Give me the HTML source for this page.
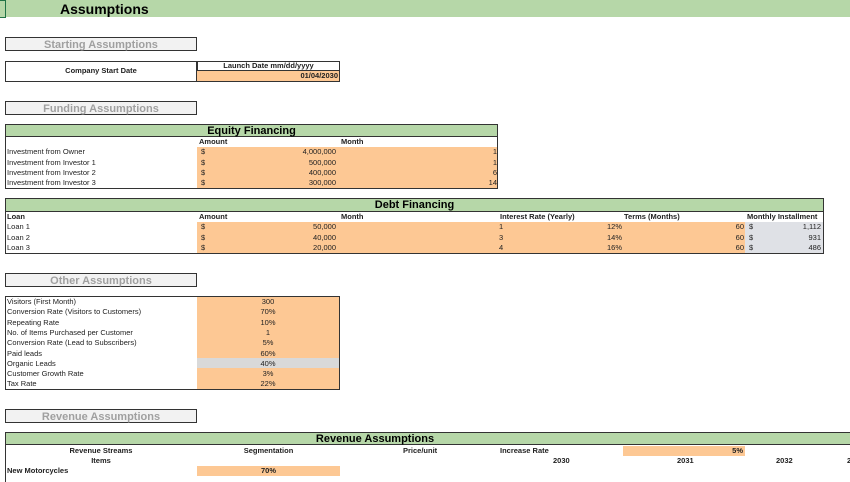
<!DOCTYPE html>
<html><head><meta charset="utf-8"><style>
*{margin:0;padding:0;box-sizing:border-box}
body{width:850px;height:472px;overflow:hidden;background:#fff;font-family:"Liberation Sans",Arial,sans-serif;font-size:7.5px;color:#222;position:relative}
.a{position:absolute}
.box{position:absolute;background:#f2f2f2;border:1.5px solid #333;color:#a0a0a0;font-weight:bold;font-size:11px;text-align:center;line-height:11px;padding-top:1.5px}
.or{background:#fdc894}
.gr{background:#b6d7a8}
.b{font-weight:bold}
.r{text-align:right}
.c{text-align:center}
.t{position:absolute;line-height:10px;white-space:nowrap}
</style></head><body>
<div class="a gr" style="left:0;top:0;width:850px;height:17px"></div>
<div class="a" style="left:0;top:0;width:6px;height:18px;border:1px solid #217346;border-left:none"></div>
<div class="t b" style="left:60px;top:2px;font-size:14px;line-height:14px;color:#000">Assumptions</div>

<div class="box" style="left:5px;top:37px;width:192px;height:14px">Starting Assumptions</div>

<div class="a" style="left:5px;top:61px;width:335px;height:21px;border:1.5px solid #333"></div>
<div class="a" style="left:196px;top:61px;width:1.5px;height:21px;background:#333"></div>
<div class="a" style="left:197px;top:70px;width:143px;height:1px;background:#333"></div>
<div class="a or" style="left:197px;top:71px;width:142px;height:10px"></div>
<div class="t b c" style="left:5px;top:66px;width:192px">Company Start Date</div>
<div class="t b c" style="left:197px;top:61px;width:143px">Launch Date mm/dd/yyyy</div>
<div class="t b r" style="left:197px;top:71px;width:141px">01/04/2030</div>

<div class="box" style="left:5px;top:101px;width:192px;height:14px">Funding Assumptions</div>

<!-- Equity -->
<div class="a" style="left:5px;top:124px;width:493px;height:65px;border:1.5px solid #333"></div>
<div class="a gr" style="left:6px;top:125px;width:491px;height:12px;border-bottom:1px solid #333"></div>
<div class="t b c" style="left:5px;top:125px;width:493px;font-size:11px;line-height:12px;color:#000">Equity Financing</div>
<div class="a or" style="left:197px;top:147px;width:300px;height:41px"></div>
<div class="t b" style="left:199px;top:137px">Amount</div>
<div class="t b" style="left:341px;top:137px">Month</div>
<div class="t" style="left:7px;top:147px">Investment from Owner</div>
<div class="t" style="left:7px;top:157.5px">Investment from Investor 1</div>
<div class="t" style="left:7px;top:168px">Investment from Investor 2</div>
<div class="t" style="left:7px;top:178px">Investment from Investor 3</div>
<div class="t" style="left:201px;top:147px">$</div><div class="t" style="left:201px;top:157.5px">$</div><div class="t" style="left:201px;top:168px">$</div><div class="t" style="left:201px;top:178px">$</div>
<div class="t r" style="left:236px;width:100px;top:147px">4,000,000</div>
<div class="t r" style="left:236px;width:100px;top:157.5px">500,000</div>
<div class="t r" style="left:236px;width:100px;top:168px">400,000</div>
<div class="t r" style="left:236px;width:100px;top:178px">300,000</div>
<div class="t r" style="left:400px;width:97px;top:147px">1</div>
<div class="t r" style="left:400px;width:97px;top:157.5px">1</div>
<div class="t r" style="left:400px;width:97px;top:168px">6</div>
<div class="t r" style="left:400px;width:97px;top:178px">14</div>

<!-- Debt -->
<div class="a" style="left:5px;top:198px;width:819px;height:56px;border:1.5px solid #333"></div>
<div class="a gr" style="left:6px;top:199px;width:817px;height:13px;border-bottom:1px solid #333"></div>
<div class="t b c" style="left:5px;top:199px;width:819px;font-size:11px;line-height:13px;color:#000">Debt Financing</div>
<div class="a or" style="left:197px;top:222px;width:548px;height:31px"></div>
<div class="a" style="left:745px;top:222px;width:78px;height:31px;background:#dfe1e6"></div>
<div class="t b" style="left:7px;top:212px">Loan</div>
<div class="t b" style="left:199px;top:212px">Amount</div>
<div class="t b" style="left:341px;top:212px">Month</div>
<div class="t b" style="left:500px;top:212px">Interest Rate (Yearly)</div>
<div class="t b" style="left:624px;top:212px">Terms (Months)</div>
<div class="t b" style="left:747px;top:212px">Monthly Installment</div>
<div class="t" style="left:7px;top:222px">Loan 1</div><div class="t" style="left:7px;top:232.5px">Loan 2</div><div class="t" style="left:7px;top:243px">Loan 3</div>
<div class="t" style="left:201px;top:222px">$</div><div class="t" style="left:201px;top:232.5px">$</div><div class="t" style="left:201px;top:243px">$</div>
<div class="t r" style="left:236px;width:100px;top:222px">50,000</div>
<div class="t r" style="left:236px;width:100px;top:232.5px">40,000</div>
<div class="t r" style="left:236px;width:100px;top:243px">20,000</div>
<div class="t" style="left:499px;top:222px">1</div><div class="t" style="left:499px;top:232.5px">3</div><div class="t" style="left:499px;top:243px">4</div>
<div class="t r" style="left:560px;width:62px;top:222px">12%</div>
<div class="t r" style="left:560px;width:62px;top:232.5px">14%</div>
<div class="t r" style="left:560px;width:62px;top:243px">16%</div>
<div class="t r" style="left:700px;width:44px;top:222px">60</div>
<div class="t r" style="left:700px;width:44px;top:232.5px">60</div>
<div class="t r" style="left:700px;width:44px;top:243px">60</div>
<div class="t" style="left:749px;top:222px">$</div><div class="t" style="left:749px;top:232.5px">$</div><div class="t" style="left:749px;top:243px">$</div>
<div class="t r" style="left:770px;width:51px;top:222px">1,112</div>
<div class="t r" style="left:770px;width:51px;top:232.5px">931</div>
<div class="t r" style="left:770px;width:51px;top:243px">486</div>

<div class="box" style="left:5px;top:273px;width:192px;height:14px">Other Assumptions</div>

<!-- Other -->
<div class="a" style="left:5px;top:296px;width:335px;height:94px;border:1.5px solid #333"></div>
<div class="a or" style="left:197px;top:297px;width:142px;height:92px"></div>
<div class="a" style="left:197px;top:358px;width:142px;height:10px;background:#d9d9d9"></div>
<div class="t" style="left:7px;top:297px">Visitors (First Month)</div><div class="t c" style="left:197px;width:142px;top:297px">300</div>
<div class="t" style="left:7px;top:307.3px">Conversion Rate (Visitors to Customers)</div><div class="t c" style="left:197px;width:142px;top:307.3px">70%</div>
<div class="t" style="left:7px;top:317.6px">Repeating Rate</div><div class="t c" style="left:197px;width:142px;top:317.6px">10%</div>
<div class="t" style="left:7px;top:327.9px">No. of Items Purchased per Customer</div><div class="t c" style="left:197px;width:142px;top:327.9px">1</div>
<div class="t" style="left:7px;top:338.2px">Conversion Rate (Lead to Subscribers)</div><div class="t c" style="left:197px;width:142px;top:338.2px">5%</div>
<div class="t" style="left:7px;top:348.5px">Paid leads</div><div class="t c" style="left:197px;width:142px;top:348.5px">60%</div>
<div class="t" style="left:7px;top:358.8px">Organic Leads</div><div class="t c" style="left:197px;width:142px;top:358.8px">40%</div>
<div class="t" style="left:7px;top:369.1px">Customer Growth Rate</div><div class="t c" style="left:197px;width:142px;top:369.1px">3%</div>
<div class="t" style="left:7px;top:379.4px">Tax Rate</div><div class="t c" style="left:197px;width:142px;top:379.4px">22%</div>

<div class="box" style="left:5px;top:409px;width:192px;height:14px">Revenue Assumptions</div>

<!-- Revenue -->
<div class="a" style="left:5px;top:432px;width:850px;height:50px;border-top:1.5px solid #333;border-left:1.5px solid #333"></div>
<div class="a gr" style="left:6px;top:433px;width:844px;height:12px;border-bottom:1px solid #333"></div>
<div class="t b c" style="left:5px;top:433px;width:740px;font-size:11px;line-height:12px;color:#000">Revenue Assumptions</div>
<div class="a or" style="left:623px;top:446px;width:122px;height:10px"></div>
<div class="a or" style="left:197px;top:466px;width:143px;height:10px"></div>
<div class="t b c" style="left:5px;width:192px;top:446px">Revenue Streams</div>
<div class="t b c" style="left:197px;width:143px;top:446px">Segmentation</div>
<div class="t b" style="left:403px;top:446px">Price/unit</div>
<div class="t b" style="left:500px;top:446px">Increase Rate</div>
<div class="t b r" style="left:623px;width:120px;top:446px">5%</div>
<div class="t b c" style="left:5px;width:192px;top:456px">Items</div>
<div class="t b" style="left:553px;top:456px">2030</div>
<div class="t b" style="left:677px;top:456px">2031</div>
<div class="t b" style="left:776px;top:456px">2032</div>
<div class="t b" style="left:847px;top:456px">2</div>
<div class="t b" style="left:7px;top:466px">New Motorcycles</div>
<div class="t b c" style="left:197px;width:143px;top:466px">70%</div>
</body></html>
